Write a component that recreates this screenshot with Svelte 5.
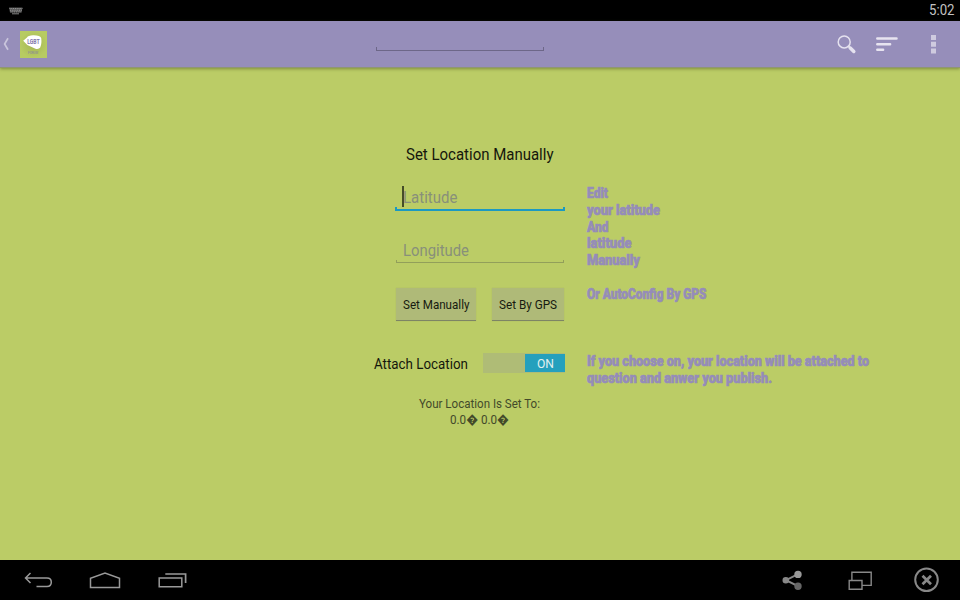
<script>
  let latitude = $state('');
  const steps = [
    ['Edit', 21], ['your latitude', 73], ['And', 21.5], ['latitude', 44.5],
    ['Manually', 53], ['', 0], ['Or AutoConfig By GPS', 119.5]
  ];
  const attachNote = [
    ['If you choose on, your location will be attached to', 282],
    ['question and anwer you publish.', 185]
  ];
</script>

{#snippet label(text, width, size, height, baseline)}
  <svg class="label" {width} {height}><text x="0" y={baseline} font-size={size} textLength={width} lengthAdjust="spacingAndGlyphs">{text}</text></svg>
{/snippet}

{#snippet note(lines)}
  <div class="note">
    {#each lines as [text, width]}
      <div class="line">{#if text}{@render label(text, width, 14.2, 16.8, 13.4)}{/if}</div>
    {/each}
  </div>
{/snippet}

<div class="screen">
  <header class="status">
    <svg class="keyboard" width="14" height="8" viewBox="0 0 14 8"><path d="M0 .5h13.500L12.500 5.500H1z" fill="#555"/><path d="M.5 1.500h13M1 3.200h12M1.500 4.900h11" stroke="#999" stroke-dasharray="1 .8"/><path d="M3 6.800h7" stroke="#888"/></svg>
    {@render label('5:02', 25.5, 14.3, 20, 15)}
  </header>

  <nav class="actionbar">
    <svg class="up" width="8" height="14" viewBox="0 0 8 14"><path d="M6 1.200 2.600 7 6 12.800" fill="none" stroke="#c9c5dc" stroke-width="1.700"/></svg>
    <svg class="logo" width="27" height="27" viewBox="0 0 27 27">
      <defs><radialGradient id="lime"><stop offset="0" stop-color="#a4b552"/><stop offset="1" stop-color="#b7cb62"/></radialGradient></defs>
      <path d="M0 0h27v27H0z" fill="url(#lime)"/>
      <path d="M3.200 9.800 7 6.400Q8 4.600 13 4.300q7-.2 8.200 2.800.8 6-1 9.300-1.300 2-4.700 1.300L7.300 14z" fill="#fff"/>
      <text x="7.200" y="13.200" font-size="7" font-weight="bold" textLength="12.500" lengthAdjust="spacingAndGlyphs" fill="#8177ab">LGBT</text>
      <text x="8" y="22.600" font-size="3" textLength="10" lengthAdjust="spacingAndGlyphs" fill="#8580a0">FORUM</text>
    </svg>
    <div class="entry header-entry"></div>
    <svg class="search" width="20" height="20" viewBox="0 0 20 20" fill="none"><circle cx="7.200" cy="6.900" r="6" stroke="#e5e2ef" stroke-width="1.500"/><path d="m11.500 11.300 1.500 1.500" stroke="#e5e2ef" stroke-width="2"/><path d="m13.300 13.100 3.500 3.400" stroke="#e5e2ef" stroke-width="3.500" stroke-linecap="round"/></svg>
    <svg class="sort" width="22" height="15" viewBox="0 0 22 15" stroke="#e7e4f0" stroke-width="2.500" stroke-linecap="round"><path d="M1.300 1.500h19.200M1.300 7.200h12.800M1.300 12.700h5.800"/></svg>
    <svg class="more" width="5" height="19" viewBox="0 0 5 19" fill="#cfcbdf"><path d="M0 0h5v5H0zM0 6.800h5v5H0zM0 13.500h5v5H0z"/></svg>
  </nav>

  <main>
    <h1>{@render label('Set Location Manually', 147.5, 16.1, 20, 15.3)}</h1>
    <section class="coordinates">
      <div class="form">
        <div class="entry latitude"><i class="caret"></i>{@render label(latitude || 'Latitude', 54.5, 16.1, 22, 15.8)}</div>
        <div class="entry longitude">{@render label('Longitude', 66, 16.1, 22, 16)}</div>
        <div class="buttons">
          <button class="manual">{@render label('Set Manually', 66.5, 12.7, 16, 12.5)}</button>
          <button class="gps">{@render label('Set By GPS', 58, 12.7, 16, 12.5)}</button>
        </div>
      </div>
      {@render note(steps)}
    </section>
    <section class="attach">
      <div class="option">
        {@render label('Attach Location', 94, 14.2, 20, 15.5)}
        <div class="switch"><div class="thumb">{@render label('ON', 17, 12.3, 14, 11.7)}</div></div>
      </div>
      {@render note(attachNote)}
    </section>
    <footer class="current">
      {@render label('Your Location Is Set To:', 121, 12.3, 16, 12)}
      {@render label('0.0� 0.0�', 59, 12.3, 16, 12)}
    </footer>
  </main>

  <nav class="system">
    <svg class="back" width="29" height="16" viewBox="0 0 29 16" fill="none" stroke="#999" stroke-width="1.500"><path d="M6.500 1 1.500 6l5 5M1.500 6H23q4.300 0 4.300 4.200T23 14.400H12.500"/></svg>
    <svg class="home" width="32" height="18" viewBox="0 0 32 18" fill="none" stroke="#999" stroke-width="1.500"><path d="M1.500 16.500V7.200L16 2l14.500 5.200v9.300z"/></svg>
    <svg class="recent" width="30" height="16" viewBox="0 0 30 16" fill="none" stroke="#999" stroke-width="1.500"><path d="M1.200 6h22.600v8.800H1.200z"/><path d="M7.300 2h20.300v9" stroke-width="1.700"/></svg>
    <svg class="share" width="20" height="20" viewBox="0 0 20 20" fill="#888" stroke="#888" stroke-width="2"><path d="m16 4.200-12 6 12 6" fill="none"/><circle cx="16" cy="4.400" r="2.700" fill="#999" stroke="#999"/><circle cx="3.800" cy="10.200" r="2.300"/><circle cx="16" cy="16.200" r="2.700" fill="#666" stroke="#666"/></svg>
    <svg class="windows" width="25" height="20" viewBox="0 0 25 20" fill="#000" stroke="#888" stroke-width="1.400"><path d="M3.900 2.200h19.300v13.200H3.900z"/><path d="M1.200 10.500h12.800v8.700H1.200z"/></svg>
    <svg class="close" width="26" height="26" viewBox="0 0 26 26" fill="none" stroke="#888"><circle cx="12.500" cy="12.800" r="11.300" stroke-width="2"/><path d="m8.500 8.800 8.500 8.500m0-8.500-8.500 8.500" stroke-width="2.700"/></svg>
  </nav>
</div>

<style>
  :global(body) { margin: 0; }
  .screen { width: 960px; height: 600px; display: flex; flex-direction: column; background: #bbcc66; font-family: Roboto, sans-serif; overflow: hidden; }
  svg { display: block; flex: none; }
  .label { overflow: visible; fill: currentColor; }
  .status { height: 21px; box-sizing: border-box; background: #000; color: #c2c2c2; display: flex; justify-content: space-between; padding: 0 5.5px 0 9px; }
  .keyboard { margin-top: 7px; }
  .actionbar { height: 47px; box-sizing: border-box; background: #968eba; border-bottom: 1px solid #8f9672; box-shadow: 0 1px 3px rgba(70, 80, 20, .5); display: flex; padding-left: 2px; position: relative; }
  .up { margin-top: 16px; }
  .logo { margin: 10px 0 0 10px; }
  .entry { box-sizing: border-box; position: relative; }
  .entry::after { content: ''; position: absolute; inset: auto 0 0; height: 3px; box-sizing: border-box; border: 1px solid #929f5a; border-top: 0; }
  .header-entry { width: 168px; height: 30px; margin-left: 329px; }
  .header-entry::after { border-color: #6d6788; height: 4px; }
  .search { margin: 14px 0 0 293px; }
  .sort { margin: 16px 0 0 19px; }
  .more { margin: 14px 0 0 33px; }
  main { height: 492px; box-sizing: border-box; padding-top: 77px; }
  h1 { margin: 0 0 0 406px; color: #15170c; font-weight: 400; }
  .coordinates { display: flex; margin: 20px 0 0 395px; height: 136px; }
  .form { width: 170px; }
  .entry.latitude { height: 26px; padding: 2px 0 0 7.5px; color: #88907a; }
  .latitude::after { height: 4px; border: 2px solid #1b99c2; border-top: 0; }
  .caret { position: absolute; left: 7px; top: 1px; width: 1.5px; height: 21px; background: #454d28; }
  .entry.longitude { width: 168px; height: 23px; margin: 29px 0 0 1px; padding-left: 6.5px; color: #88907a; }
  .longitude .label { margin-top: 1px; }
  .buttons { display: flex; gap: 16px; padding: 25px 0 0 1px; }
  button { display: flex; align-items: center; justify-content: center; box-sizing: border-box; height: 33px; padding: 0; border: 0; border-bottom: 1px solid #7d8465; background: #afba78; box-shadow: 0 0 1px #a6b267; color: #171a10; font-family: inherit; }
  .manual { width: 80px; }
  .gps { width: 72px; }
  .note { color: #958cb9; font-weight: 900; margin-left: 22px; }
  .note .label { stroke: currentColor; stroke-width: .65px; }
  .line { height: 16.8px; }
  .attach { display: flex; margin: 32px 0 0 373.5px; }
  .option { width: 191.5px; display: flex; color: #15170c; }
  .switch { width: 82.5px; height: 20px; margin-left: auto; background: #afbc76; display: flex; justify-content: flex-end; box-sizing: border-box; padding: 1px 0; }
  .thumb { width: 40px; height: 18px; background: #25a0bd; color: #e2f1ef; display: flex; align-items: center; justify-content: center; }
  .current { color: #434a2a; display: flex; flex-direction: column; align-items: center; margin: 9px 1px 0 0; }
  .system { height: 40px; background: #000; display: flex; align-items: center; }
  .back { margin-left: 24px; }
  .home { margin-left: 36px; }
  .recent { margin-left: 37px; }
  .share { margin-left: 594px; }
  .windows { margin-left: 46px; }
  .close { margin-left: 41px; }
</style>
